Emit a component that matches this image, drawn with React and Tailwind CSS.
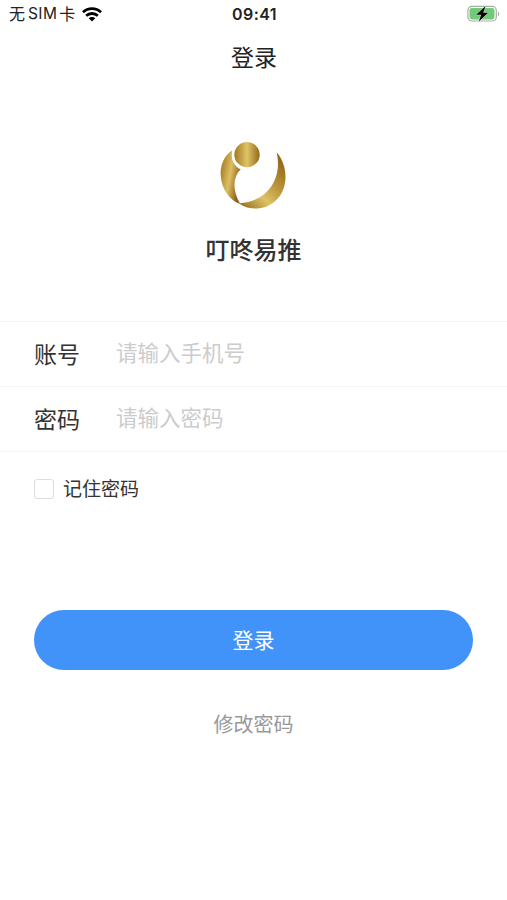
import { useState } from "react";

function StatusBar() {
  return (
    <div className="flex h-7 items-center justify-between pl-[9px] pr-[7px] text-[#222]">
      <div className="flex w-[200px] items-center">
        <span className="text-[16px] leading-none">无</span>
        <span className="ml-[3px] text-[15.5px] leading-none tracking-[0.4px]">
          SIM
        </span>
        <span className="ml-[2px] text-[16px] leading-none">卡</span>
        <svg className="ml-[7px] h-[15px] w-5" viewBox="0 0 20 15">
          <g fill="none" stroke="#000" strokeWidth="2.8">
            <path d="M1 5.2C6 0.4 14 0.4 19 5.2" />
            <path d="M4.2 8.8C7.4 5.7 12.6 5.7 15.8 8.8" />
          </g>
          <path d="M6.7 11.3C8.6 9.4 11.4 9.4 13.3 11.3L10 14.5Z" fill="#000" />
        </svg>
      </div>
      <span className="text-[16px] leading-none font-semibold tracking-[0.4px]">
        09:41
      </span>
      <div className="flex w-[200px] justify-end">
        <svg className="h-[18px] w-[33px]" viewBox="0 0 33 18">
          <rect
            x="0.9"
            y="1.4"
            width="28.4"
            height="14.6"
            rx="4"
            fill="#fff"
            stroke="#a5b0a5"
            strokeWidth="1.2"
          />
          <rect x="2.5" y="3" width="25" height="11.4" rx="2.4" fill="#73ca79" />
          <path d="M31 6.4C32.6 7.1 32.6 10.3 31 11Z" fill="#a5a5a5" />
          <path
            d="M18.6 1L9.2 9.8H14.2L11.8 16.6L21.2 7.8H16.2Z"
            fill="#000"
            stroke="#d5f0d6"
            strokeWidth="0.8"
            paintOrder="stroke"
          />
        </svg>
      </div>
    </div>
  );
}

function Logo() {
  return (
    <svg className="ml-[2px] h-[90px] w-[100px]" viewBox="0 0 300 270">
      <defs>
        <linearGradient id="head" x1="0" x2="1" y1="0" y2="0">
          <stop offset="0" stopColor="#a17a20" />
          <stop offset="0.5" stopColor="#e0c468" />
          <stop offset="1" stopColor="#93691a" />
        </linearGradient>
        <linearGradient
          id="body"
          gradientUnits="userSpaceOnUse"
          x1="48"
          y1="125"
          x2="114"
          y2="137"
        >
          <stop offset="0" stopColor="#ad8529" />
          <stop offset="0.42" stopColor="#dcbf63" />
          <stop offset="0.9" stopColor="#8c6117" />
          <stop offset="1" stopColor="#8c6117" />
        </linearGradient>
        <linearGradient
          id="arc"
          gradientUnits="userSpaceOnUse"
          x1="105"
          y1="225"
          x2="232"
          y2="95"
        >
          <stop offset="0" stopColor="#9a7020" />
          <stop offset="0.35" stopColor="#dfc265" />
          <stop offset="0.65" stopColor="#b9933a" />
          <stop offset="1" stopColor="#94691a" />
        </linearGradient>
      </defs>
      <circle cx="126" cy="74" r="38" fill="url(#head)" />
      <path
        d="M82 61C57 77 46 106 47 135C49 179 76 213 106 222C83 184 82 143 107 118C89 111 75 88 82 61Z"
        fill="url(#body)"
      />
      <path
        d="M215 67C233 145 188 215 103 220C119 236 153 240 183 230C231 212 250 162 238 112C233 93 225 78 215 67Z"
        fill="url(#arc)"
      />
    </svg>
  );
}

function Field({ label, placeholder, type, value, onChange }) {
  return (
    <label className="flex h-[65px] items-center border-b border-[#f3f3f3] pt-[2px] pl-[34px]">
      <span className="w-[82px] text-[23px] text-[#333]">{label}</span>
      <input
        className="min-w-0 flex-1 pb-1 text-[21.5px] text-[#333] outline-none placeholder:text-[#ccc]"
        type={type}
        placeholder={placeholder}
        value={value}
        onChange={onChange}
      />
    </label>
  );
}

export default function App() {
  const [account, setAccount] = useState("");
  const [password, setPassword] = useState("");
  const [remember, setRemember] = useState(false);

  return (
    <div className="flex h-[900px] w-[507px] flex-col overflow-hidden bg-white font-['Inter','Noto_Sans_CJK_SC',sans-serif]">
      <StatusBar />

      <h1 className="flex h-[60px] items-center justify-center pl-px text-[23px] text-[#222]">
        登录
      </h1>

      <div className="flex flex-col items-center pt-[42px]">
        <Logo />
        <h2 className="mt-[13px] text-[24px] leading-9 font-medium text-[#333]">
          叮咚易推
        </h2>
      </div>

      <form className="mt-[52px] border-t border-[#f3f3f3]">
        <Field
          label="账号"
          placeholder="请输入手机号"
          type="text"
          value={account}
          onChange={(e) => setAccount(e.target.value)}
        />
        <Field
          label="密码"
          placeholder="请输入密码"
          type="password"
          value={password}
          onChange={(e) => setPassword(e.target.value)}
        />
      </form>

      <label className="mt-[23px] ml-[34px] flex h-7 items-center text-[19px] text-[#333]">
        <input
          className="mr-[9px] h-5 w-5 appearance-none rounded-[3px] border border-[#ddd] checked:bg-[#4192f9]"
          type="checkbox"
          checked={remember}
          onChange={() => setRemember(!remember)}
        />
        <span className="pt-[2px]">记住密码</span>
      </label>

      <button className="mx-[34px] mt-[107px] h-[60px] shrink-0 rounded-full bg-[#4192f9] pt-px text-[21px] text-white">
        登录
      </button>

      <button className="mx-auto mt-[39px] text-[20px] leading-8 text-[#999]">
        修改密码
      </button>
    </div>
  );
}
